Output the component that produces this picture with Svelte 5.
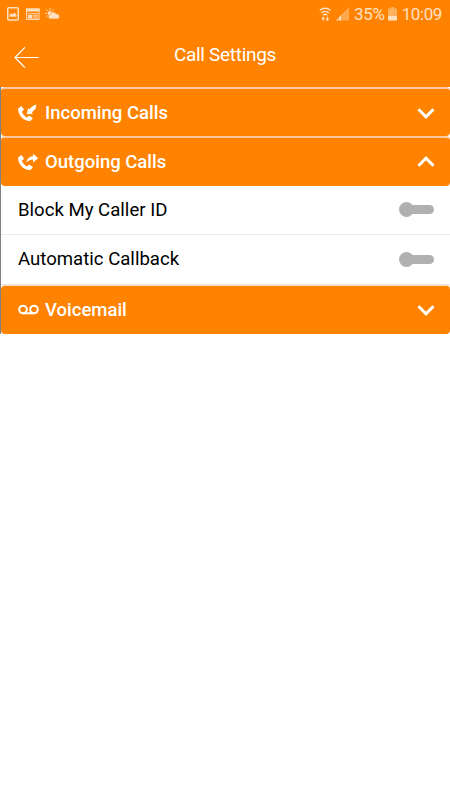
<script>
  // Accordion sections
  let sections = $state([
    { id: 'incoming', title: 'Incoming Calls', open: false, items: [] },
    {
      id: 'outgoing',
      title: 'Outgoing Calls',
      open: true,
      items: [
        { label: 'Block My Caller ID', on: false },
        { label: 'Automatic Callback', on: false }
      ]
    },
    { id: 'voicemail', title: 'Voicemail', open: false, items: [] }
  ]);
</script>

<div class="screen">
  <div class="status-bar">
    <div class="notifications">
      <svg class="picture" width="12" height="14" viewBox="0 0 12 14">
        <rect x="0.75" y="0.75" width="10.5" height="12.2" rx="1" fill="none" stroke="currentColor" stroke-width="1.5" />
        <path d="M2.6 9.8V7.8l1.9-1.5 1.2 1.1 1.7-2 2 2.4v2z" fill="currentColor" />
      </svg>
      <svg class="news" width="14" height="12" viewBox="0 0 14 12">
        <rect x="0.6" y="1.1" width="12.4" height="10.3" fill="none" stroke="currentColor" stroke-width="1" />
        <path d="M0 .5h13.6v3H0zM2 5.2h9.8v1H2zM2 7h4.3v3.4H2zM7.2 7h4.6v.8H7.2zM7.2 8.4h4.6v.8H7.2zM7.2 9.8h4.6v.7H7.2z" fill="currentColor" />
      </svg>
      <svg class="weather" width="15" height="12" viewBox="0 0 15 12">
        <path d="M5 0v2.200M1.200 1.400l1.500 1.500M0 5.300h2M1.200 9l1.500-1.400M8.800 1.300L7.400 2.700" stroke="currentColor" stroke-width="1" fill="none" />
        <circle cx="5" cy="5.3" r="2.3" fill="currentColor" />
        <path d="M5.200 10.900a2.300 2.300 0 0 1-.2-4.500 3.300 3.300 0 0 1 6.200-.5 2.500 2.500 0 0 1 1.300 5z" fill="currentColor" stroke="#ff8300" stroke-width=".5" />
      </svg>
    </div>
    <div class="system">
      <svg class="wifi" width="13" height="15" viewBox="0 0 13 15">
        <path d="M.8 3.400a8 8 0 0 1 10.800 0M2.400 5.900a5.600 5.600 0 0 1 7.600 0M4.200 8.200a3 3 0 0 1 4 0" fill="none" stroke="currentColor" stroke-width="1.4" />
        <path d="M4.200 9.500l2 2.200H4.800v2H3.600v-2H2.200zM8.500 14l-2-2.200h1.400v-2h1.200v2h1.400z" fill="currentColor" />
      </svg>
      <svg class="signal" width="13" height="14" viewBox="0 0 13 14">
        <path d="M13 0v13.500H0z" fill="currentColor" opacity=".4" />
        <path d="M0 13.500l2-2v2zM3 13.500v-3.200l2-2v5.200z" fill="currentColor" />
      </svg>
      <span class="percent">35%</span>
      <svg class="battery" width="9" height="14" viewBox="0 0 9 14">
        <path d="M3 0h3v1.500h3V9H0V1.500h3z" fill="currentColor" opacity=".5" />
        <path d="M0 9h9v4.500H0z" fill="currentColor" />
      </svg>
      <span class="clock">10:09</span>
    </div>
  </div>

  <header>
    <button class="back" aria-label="Back">
      <svg width="26" height="22" viewBox="0 0 26 22">
        <path d="M24.600 11.500H1.200M11 1.300L1 11.500l10 10.200" fill="none" stroke="currentColor" stroke-width="1.2" />
      </svg>
    </button>
    <h1>Call Settings</h1>
  </header>

  <main>
    {#each sections as section, i (section.id)}
      <section>
        <button
          class="section-header"
          class:after-rows={i > 0 && sections[i - 1].open && sections[i - 1].items.length > 0}
          onclick={() => (section.open = !section.open)}
          aria-expanded={section.open}
        >
          <svg class="section-icon" width="21" height="18" viewBox="0 0 21 18">
            {#if section.id === 'voicemail'}
              <g fill="none" stroke="currentColor" stroke-width="2">
                <circle cx="5" cy="8.5" r="3.8" />
                <circle cx="16" cy="8.5" r="3.8" />
                <path d="M5 12.300h11" />
              </g>
            {:else}
              <path d="M.5 4.200L2.700 2.500c.4-.3.800-.2 1.100.1l1.900 2.500c.3.400.2.800-.1 1.100L3.900 7.600c.7 2.700 2.600 4.900 5.200 6l1.400-1.500c.3-.3.700-.3 1.100-.1l2.600 1.500c.5.300.6.700.3 1.200l-1.600 1.700c-.3.400-.7.600-1.200.6C5.500 16.700.5 11.400.1 5.400c0-.5.100-.9.400-1.200z" fill="currentColor" />
              {#if section.id === 'incoming'}
                <path d="M18.400.6c-.2 3.600-1.800 6.300-4.600 7.600l1.200 1.500-6.300.5 1.500-6.100 1.300 1.500c1.500-2.400 3.700-4.200 6.900-5z" fill="currentColor" />
              {:else}
                <path d="M20.200 5.200L15 .7v2.500c-3.700.2-6.200 2.800-6.600 6.400 1.900-2 3.900-3.100 6.600-3.100v3.100z" fill="currentColor" />
              {/if}
            {/if}
          </svg>
          <span class="section-title">{section.title}</span>
          <svg class="chevron" class:open={section.open} width="18" height="12" viewBox="0 0 18 12">
            <path d="M1.500 2.300L9 9.800l7.500-7.500" fill="none" stroke="currentColor" stroke-width="3" />
          </svg>
        </button>
        {#if section.open}
          {#each section.items as item}
            <div class="row">
              <span>{item.label}</span>
              <button
                class="toggle"
                class:on={item.on}
                role="switch"
                aria-checked={item.on}
                aria-label={item.label}
                onclick={() => (item.on = !item.on)}
              >
                <span class="knob"></span>
              </button>
            </div>
          {/each}
        {/if}
      </section>
    {/each}
  </main>
</div>

<style>
  :global(body) {
    margin: 0;
    background: #fff;
  }

  .screen {
    width: 450px;
    height: 800px;
    overflow: hidden;
    background: #fff;
    font-family: Roboto, sans-serif;
    color: #111;
  }

  button {
    margin: 0;
    padding: 0;
    border: none;
    background: none;
    font: inherit;
    color: inherit;
    cursor: pointer;
  }

  svg {
    display: block;
    flex: none;
  }

  .status-bar {
    display: flex;
    justify-content: space-between;
    height: 28px;
    padding: 0 8px 0 7px;
    box-sizing: border-box;
    background: #ff8300;
    color: #ffe0c0;
    font-size: 17px;
    line-height: 28px;
  }

  .notifications,
  .system {
    display: flex;
    align-items: center;
  }

  .news {
    margin-left: 7px;
  }

  .weather {
    margin-left: 5px;
  }

  .signal {
    margin-left: 4px;
  }

  .percent {
    margin-left: 5px;
    letter-spacing: -0.3px;
  }

  .battery {
    margin: 0 5px 0 3px;
  }

  .clock {
    letter-spacing: -0.4px;
  }

  header {
    display: grid;
    grid-template-columns: 50px 1fr 50px;
    height: 59px;
    background: #ff8300;
    color: #fff;
  }

  .back {
    align-self: start;
    padding: 18px 0 0 14px;
  }

  h1 {
    margin: 0;
    padding-top: 16px;
    font-size: 19px;
    font-weight: 400;
    line-height: 22px;
    letter-spacing: -0.3px;
    text-align: center;
  }

  main {
    border-left: 1px solid #808080;
  }

  .section-header {
    display: flex;
    align-items: center;
    width: 100%;
    height: 49.4px;
    padding: 0.7px 15px 0 17px;
    box-sizing: border-box;
    border-top: 2px solid #ffc8a4;
    border-radius: 4px;
    background: #ff8300;
    color: #fff;
    text-align: left;
  }

  .section-header.after-rows {
    border-top: 1px solid #ffd9c0;
    padding-top: 0.6px;
  }

  .section-title {
    flex: 1;
    margin-left: 6px;
    font-size: 18.5px;
    font-weight: 500;
  }

  .chevron.open {
    transform: rotate(180deg);
  }

  .row {
    display: flex;
    align-items: center;
    justify-content: space-between;
    height: 49.4px;
    padding: 0 16px 0 17px;
    box-sizing: border-box;
    border-bottom: 1px solid #ebebeb;
    font-size: 18.6px;
    color: #000;
  }

  .toggle {
    display: flex;
    align-items: center;
    width: 33px;
    height: 9px;
    border-radius: 5px;
    background: #b0b0b0;
  }

  .knob {
    width: 15px;
    height: 15px;
    margin-left: -2px;
    border-radius: 50%;
    background: #b0b0b0;
    flex: none;
  }

  .toggle.on {
    justify-content: flex-end;
    background: #ffc080;
  }

  .toggle.on .knob {
    background: #ff8300;
  }
</style>
